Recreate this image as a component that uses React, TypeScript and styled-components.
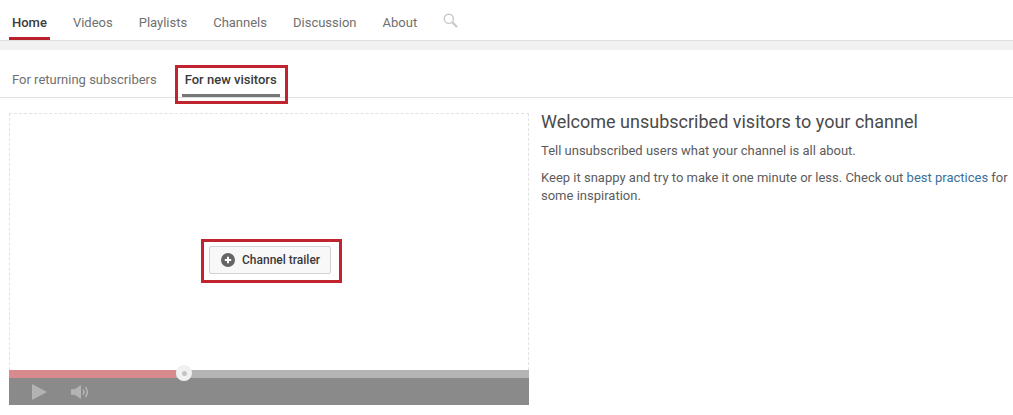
import React from "react";
import styled, { createGlobalStyle } from "styled-components";

const Global = createGlobalStyle`
  html, body { margin: 0; padding: 0; background: #fff; }
  body { font-family: Roboto, "Liberation Sans", sans-serif; overflow: hidden; }
`;

const Page = styled.div`
  width: 1013px;
  height: 415px;
  overflow: hidden;
  display: flex;
  flex-direction: column;
`;

const TopNav = styled.nav`
  height: 40px;
  padding-left: 12px;
  display: flex;
  gap: 26px;
  align-items: flex-start;
  border-bottom: 1px solid #dedede;
`;

const NavItem = styled.div<{ $active?: boolean }>`
  position: relative;
  height: 40px;
  line-height: 45px;
  font-size: 13px;
  color: ${(p) => (p.$active ? "#3a3a3a" : "#707070")};
  font-weight: ${(p) => (p.$active ? 500 : 400)};
  ${(p) =>
    p.$active &&
    `&::after {
      content: "";
      position: absolute;
      left: -3px;
      right: -3px;
      bottom: 0;
      height: 3px;
      background: #b9222d;
    }`}
`;

const SearchIcon = styled.svg`
  width: 15px;
  height: 15px;
  margin: 13px 0 0 0;
`;

const Band = styled.div`
  height: 9px;
  background: #f1f1f1;
`;

const SubTabs = styled.div`
  height: 48px;
  box-sizing: border-box;
  padding-left: 12px;
  display: flex;
  gap: 28px;
  border-bottom: 1px solid #e2e2e2;
`;

const SubTab = styled.div<{ $active?: boolean }>`
  position: relative;
  height: 47px;
  line-height: 59px;
  font-size: 13px;
  color: ${(p) => (p.$active ? "#3a3a3a" : "#707070")};
  font-weight: ${(p) => (p.$active ? 500 : 400)};
  ${(p) =>
    p.$active &&
    `&::after {
      content: "";
      position: absolute;
      left: -3px;
      right: -3px;
      bottom: 0;
      height: 3px;
      background: #777;
    }`}
`;

const RedBox = styled.div`
  position: absolute;
  border: 3px solid #c0252f;
  box-sizing: border-box;
  pointer-events: none;
`;

const TabHighlight = styled(RedBox)`
  left: -10px;
  right: -11px;
  top: 15px;
  height: 39px;
`;

const Body = styled.div`
  display: flex;
  padding: 15px 0 0 9px;
  gap: 12px;
`;

const Trailer = styled.div`
  width: 520px;
  height: 292px;
  box-sizing: border-box;
  border: 1px dashed #e2e2e2;
  border-bottom: 0;
  display: flex;
  flex-direction: column;
`;

const TrailerStage = styled.div`
  flex: 1;
  display: flex;
  align-items: flex-start;
  justify-content: center;
  padding: 132px 0 0 2px;
`;

const TrailerButton = styled.div`
  position: relative;
  width: 122px;
  height: 28px;
  box-sizing: border-box;
  background: #f8f8f8;
  border: 1px solid #d3d3d3;
  border-radius: 2px;
  display: flex;
  align-items: center;
  padding-left: 11px;
  gap: 7px;
  font-size: 12px;
  font-weight: 500;
  color: #3a3a3a;
`;

const ButtonHighlight = styled(RedBox)`
  left: -9px;
  top: -8px;
  width: 141px;
  height: 44px;
`;

const PlusIcon = styled.svg`
  width: 14px;
  height: 14px;
  flex: none;
`;

const Progress = styled.div`
  position: relative;
  height: 8px;
  margin: 0 -1px;
  background: #b4b4b4;
`;

const Played = styled.div`
  height: 100%;
  width: 167px;
  background: #d88a8c;
`;

const Thumb = styled.div`
  position: absolute;
  left: 167px;
  top: -5px;
  width: 16px;
  height: 16px;
  border-radius: 50%;
  background: #f1f1f1;
  display: flex;
  align-items: center;
  justify-content: center;
  &::after {
    content: "";
    width: 5px;
    height: 5px;
    border-radius: 50%;
    background: #c4c4c4;
  }
`;

const Controls = styled.div`
  height: 27px;
  margin: 0 -1px;
  background: #8a8a8a;
  display: flex;
  align-items: center;
  padding-left: 23px;
  gap: 24px;
`;

const ControlIcon = styled.svg`
  fill: #b3b3b3;
  display: block;
`;

const Copy = styled.div`
  width: 470px;
  color: #5c5c5c;
  font-size: 13px;
  line-height: 18px;
`;

const Title = styled.h2`
  margin: 0 0 11px;
  font-size: 18px;
  font-weight: 400;
  line-height: 18px;
  color: #4a4a4a;
`;

const Para = styled.p`
  margin: 0 0 9px;
`;

const Link = styled.a`
  color: #3b7199;
`;

export default function App() {
  return (
    <Page>
      <Global />
      <TopNav>
        <NavItem $active>Home</NavItem>
        <NavItem>Videos</NavItem>
        <NavItem>Playlists</NavItem>
        <NavItem>Channels</NavItem>
        <NavItem>Discussion</NavItem>
        <NavItem>About</NavItem>
        <SearchIcon viewBox="0 0 15 15" fill="none" stroke="#c8c8c8">
          <circle cx="5.8" cy="5.8" r="4.6" strokeWidth="1.4" />
          <path d="M9.3 9.3 L14 14" strokeWidth="2.2" />
        </SearchIcon>
      </TopNav>
      <Band />
      <SubTabs>
        <SubTab>For returning subscribers</SubTab>
        <SubTab $active>
          For new visitors
          <TabHighlight />
        </SubTab>
      </SubTabs>
      <Body>
        <Trailer>
          <TrailerStage>
            <TrailerButton>
              <ButtonHighlight />
              <PlusIcon viewBox="0 0 14 14">
                <circle cx="7" cy="7" r="7" fill="#666" />
                <path d="M7 3.8v6.4M3.8 7h6.4" stroke="#fff" strokeWidth="2" />
              </PlusIcon>
              Channel trailer
            </TrailerButton>
          </TrailerStage>
          <Progress>
            <Played />
            <Thumb />
          </Progress>
          <Controls>
            <ControlIcon width="15" height="16" viewBox="0 0 15 16">
              <path d="M0 0 L15 8 L0 16 Z" />
            </ControlIcon>
            <ControlIcon width="20" height="16" viewBox="0 0 20 16">
              <path d="M0 5 H4 L10 1 V15 L4 11 H0 Z" />
              <path
                d="M12 5.5 Q14 8 12 10.5 M14.5 3 Q18 8 14.5 13"
                fill="none"
                stroke="#b3b3b3"
                strokeWidth="1.6"
              />
            </ControlIcon>
          </Controls>
        </Trailer>
        <Copy>
          <Title>Welcome unsubscribed visitors to your channel</Title>
          <Para>Tell unsubscribed users what your channel is all about.</Para>
          <Para>
            Keep it snappy and try to make it one minute or less. Check out{" "}
            <Link>best practices</Link> for some inspiration.
          </Para>
        </Copy>
      </Body>
    </Page>
  );
}
